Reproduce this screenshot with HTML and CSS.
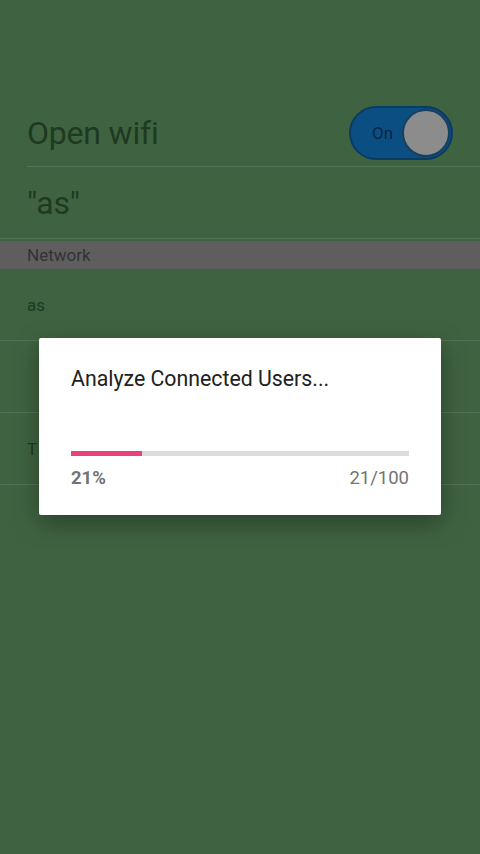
FILE: index.html
```html
<!DOCTYPE html>
<html>
<head>
<meta charset="utf-8">
<link rel="stylesheet" href="styles.css">
</head>
<body>
<div class="screen">
  <div class="list">
    <div class="row row-big">
      <span class="big-text">Open wifi</span>
      <div class="toggle"><span class="toggle-label">On</span><span class="thumb"></span></div>
    </div>
    <div class="sep sep-inset"></div>
    <div class="row row-big2">
      <span class="big-text">"as"</span>
    </div>
    <div class="sep"></div>
    <div class="header">Network</div>
    <div class="row row-small">
      <span class="small-text">as</span>
    </div>
    <div class="sep"></div>
    <div class="row row-small"></div>
    <div class="sep"></div>
    <div class="row row-small">
      <span class="small-text">T</span>
    </div>
    <div class="sep"></div>
  </div>

  <div class="dialog">
    <div class="dialog-title">Analyze Connected Users...</div>
    <div class="progress"><div class="progress-fill" style="width:21%"></div></div>
    <div class="progress-info">
      <span class="pct">21%</span>
      <span class="count">21/100</span>
    </div>
  </div>
</div>
</body>
</html>
```

FILE: styles.css
```css
* { box-sizing: border-box; }
html, body {
  margin: 0;
  padding: 0;
  background: #3f6340;
}
.screen {
  position: relative;
  width: 480px;
  height: 854px;
  font-family: Roboto, "Noto Sans", sans-serif;
  background: #3f6340;
  overflow: hidden;
}
.list {
  padding-top: 100px;
  display: flex;
  flex-direction: column;
}
.row {
  display: flex;
  align-items: center;
  justify-content: space-between;
  padding-left: 27px;
  padding-right: 27px;
}
.row-big { height: 66px; }
.row-big2 { height: 71px; }
.row-small { height: 71px; }
.big-text {
  font-size: 32px;
  color: #1e3a20;
  letter-spacing: -0.2px;
}
.small-text {
  font-size: 17px;
  color: #1e3a20;
}
.sep {
  height: 1px;
  background: #547555;
}
.sep-inset { margin-left: 27px; }
.header {
  margin-top: 2px;
  height: 28px;
  background: #5e5e5e;
  color: #333333;
  font-size: 17px;
  padding-left: 27px;
  display: flex;
  align-items: center;
}
.toggle {
  width: 104px;
  height: 54px;
  border-radius: 27px;
  background: #0b4f82;
  border: 2px solid #0a3b62;
  display: flex;
  align-items: center;
  justify-content: space-between;
  padding-left: 21px;
  padding-right: 1px;
}
.toggle-label {
  font-size: 17px;
  color: #0a2444;
}
.thumb {
  width: 48px;
  height: 48px;
  border-radius: 50%;
  background: #8c8c8c;
  border: 2px solid #173f60;
}
.dialog {
  position: absolute;
  left: 39px;
  top: 338px;
  width: 402px;
  height: 177px;
  background: #ffffff;
  border-radius: 2px;
  box-shadow: 0 8px 24px rgba(0,0,0,0.35);
  padding: 28px 32px 0 32px;
}
.dialog-title {
  font-size: 21.3px;
  color: #212121;
  line-height: 26px;
}
.progress {
  margin-top: 59px;
  height: 5px;
  background: #dcdcdc;
}
.progress-fill {
  height: 100%;
  background: #ec407a;
}
.progress-info {
  margin-top: 11px;
  display: flex;
  justify-content: space-between;
  font-size: 18.5px;
  color: #737373;
}
.pct { font-weight: 700; }
```
